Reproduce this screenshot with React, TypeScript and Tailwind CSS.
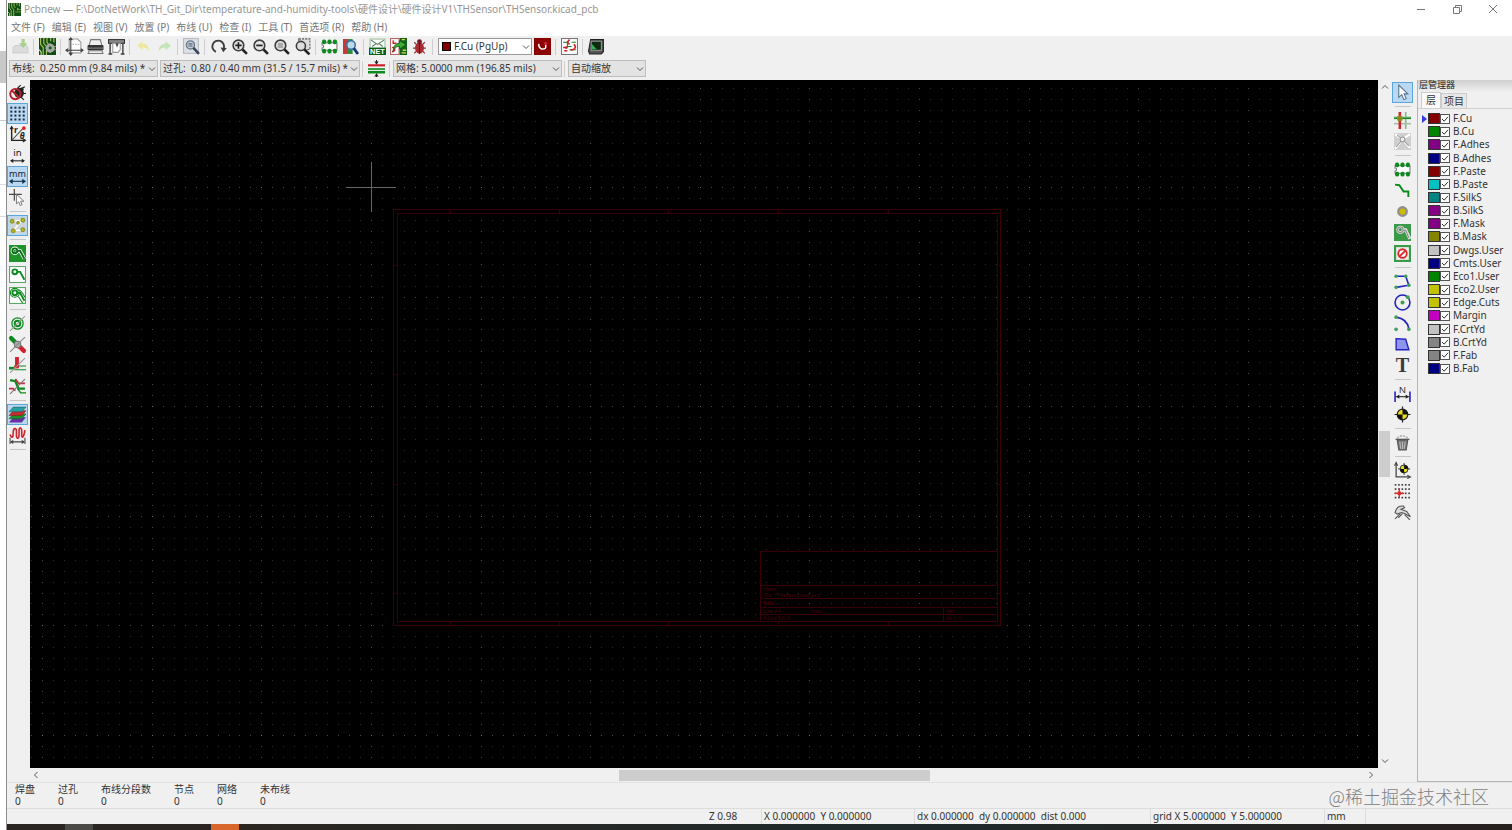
import React, { useState } from "react";

const GREEN = "#0b8a1e";
const RED = "#d0212c";
const INK = "#3c3c3c";
const BLUE = "#2222c0";

/* ---------- icons: 16 x 16 drawings ---------- */

const magnifier = (
  <>
    <circle cx="7" cy="7" r="5" fill="#e4e4e4" stroke={INK} strokeWidth="1.5" />
    <path d="M10.8 10.8L15 15" stroke="#222" strokeWidth="2.4" />
  </>
);

const trace = (c: string) => (
  <>
    <circle cx="5.5" cy="5.5" r="2.3" fill="none" stroke={c} strokeWidth="1.8" />
    <path d="M8 5.5H10.5L14.5 13" fill="none" stroke={c} strokeWidth="1.8" />
  </>
);

const target = (
  <>
    <circle cx="8" cy="8" r="5" fill="#e6dc20" stroke="#222" strokeWidth="1.1" />
    <path d="M8 8V3A5 5 0 0 1 13 8ZM8 8V13A5 5 0 0 1 3 8Z" fill="#111" />
    <path d="M8 .5V4M8 12V15.5M.5 8H4M12 8H15.5" stroke="#222" strokeWidth="1.1" />
  </>
);

const footprint = (
  <>
    <path d="M1 4.500H15V11.500H1V9.500A1.500 1.500 0 0 0 1 6.500Z" fill="#fff" stroke="#777" />
    {[1, 6.1, 11.2].map((x) => (
      <g key={x} fill={GREEN}>
        <rect x={x} y="1.5" width="3.8" height="4.3" rx="1.6" />
        <rect x={x} y="10.2" width="3.8" height="4.3" rx="1.6" />
      </g>
    ))}
  </>
);

const board = (
  <>
    <rect width="16" height="16" fill="#104d14" />
    <path d="M1.5 0V6L4 9V16M4.5 0V5L7 8V16M7.5 0V4L9 6M11 0V3M14 0V4" fill="none" stroke="#a9c25b" strokeWidth="1.1" />
    <path d="M0 11L2 13V16M12 6V9" stroke="#d8e79a" fill="none" />
    <path d="M9 11H16M11 8H16" stroke="#7fa548" />
  </>
);

const ICONS: Record<string, React.ReactNode> = {
  save: (
    <>
      <path d="M1 9L3 7H13L15 9V14H1Z" fill="#dcdcdc" stroke="#cfcfcf" />
      <path d="M9 1H12V5H14.5L10.5 9.5L6.5 5H9Z" fill="#a9cf95" />
    </>
  ),
  board,
  setup: (
    <>
      {board}
      <circle cx="10.5" cy="9.5" r="3" fill="none" stroke="#a8a8a8" strokeWidth="2.2" />
      <path d="M10.500 5V14M6 9.500H15M7.500 6.500L13.500 12.500M13.500 6.500L7.500 12.500" stroke="#a8a8a8" strokeWidth="1.2" />
      <circle cx="10.500" cy="9.500" r="1.400" fill="#1a5a1c" />
    </>
  ),
  page: (
    <>
      <path d="M3 1H11L14 4V14H3Z" fill="#fff" stroke="#999" />
      <path d="M4.500 0V16M0 11.500H16M3 2L4.500 0L6 2M14 10L16 11.500L14 13M2 10L0 11.500L2 13M3 14L4.500 16L6 14" fill="none" stroke={INK} />
      <path d="M6 6H13" stroke="#bbb" strokeDasharray="1.500 1" />
    </>
  ),
  print: (
    <>
      <path d="M3.500 1.500H12.500L14 7H2Z" fill="#eee" stroke="#777" />
      <rect x=".5" y="6.500" width="15" height="5" rx="1" fill="#333" />
      <path d="M1 9.500H15" stroke="#888" />
      <path d="M2 12H14L15 14.500H1Z" fill="#eee" stroke="#777" />
    </>
  ),
  plot: (
    <>
      <rect x=".5" y="1.500" width="15" height="3.500" fill="#888" stroke="#333" />
      <path d="M2 5V15M14 5V15M.5 15H4M12 15H15.500" stroke={INK} strokeWidth="1.300" />
      <path d="M4.500 5H11.500V11L9.500 13.500H4.500Z" fill="#fff" stroke="#999" />
      <path d="M7 5H10L8.500 9Z" fill="#444" />
    </>
  ),
  undo: <path d="M2 7L7 3V5.500C11 5.500 13.500 8 13.500 12.500C12 10 10 9 7 9V11.500Z" fill="#efe79f" />,
  redo: <path d="M14 7L9 3V5.500C5 5.500 2.500 8 2.500 12.500C4 10 6 9 9 9V11.500Z" fill="#c3e6b8" />,
  find: (
    <>
      <rect x=".5" y=".5" width="14" height="14" fill="#dde1e6" stroke="#b4bac2" />
      <circle cx="7" cy="6.500" r="3.800" fill="#c3cedb" stroke="#6a7687" strokeWidth="1.300" />
      <path d="M9.800 9.300L15 15" stroke="#39445a" strokeWidth="2.400" />
      <path d="M5 5.500H9M5 7.500H9" stroke="#55637a" />
    </>
  ),
  refresh: (
    <>
      <path d="M5.500 13A5.500 5.500 0 1 1 13 9.500" fill="none" stroke={INK} strokeWidth="1.700" />
      <path d="M10 9L15.800 9.500L12.500 13.500Z" fill={INK} />
    </>
  ),
  zoomIn: (
    <>
      {magnifier}
      <path d="M7 4V10M4 7H10" stroke="#222" strokeWidth="1.600" />
    </>
  ),
  zoomOut: (
    <>
      {magnifier}
      <path d="M4 7H10" stroke="#222" strokeWidth="1.600" />
    </>
  ),
  zoomFit: (
    <>
      {magnifier}
      <rect x="4.500" y="4.500" width="5" height="5" fill="#aaa" />
    </>
  ),
  zoomSel: (
    <>
      <rect x="4.500" y=".8" width="10.500" height="10" fill="#ddd" stroke="#555" strokeDasharray="2 1" />
      <circle cx="6.500" cy="7.500" r="4.300" fill="#ddd" stroke={INK} strokeWidth="1.500" />
      <path d="M9.800 10.800L14.500 15.500" stroke="#222" strokeWidth="2.400" />
    </>
  ),
  footprint,
  footprintFind: (
    <>
      <rect x="1" y="1" width="9" height="14" fill="#2f8a44" />
      <path d="M1 1H5V15H1Z" fill="#c23a3a" />
      <circle cx="8.500" cy="6.500" r="4" fill="#b9dbe8" stroke="#3a70a8" strokeWidth="1.400" />
      <path d="M11 9.500L15 15" stroke="#123a72" strokeWidth="2.600" />
    </>
  ),
  net: (
    <>
      <rect x="1" y="1" width="14" height="14" fill="#fff" stroke="#9dbda0" />
      <path d="M2 2L8 6L14 2M3 8L7 5M13 8L9 5" fill="none" stroke="#4c7f52" />
      <rect x="0" y="9" width="16" height="7" fill="#0a5f1b" />
      <text x="8" y="15" textAnchor="middle" fontSize="7" fontWeight="700" fontFamily="Liberation Sans, sans-serif" fill="#fff">NET</text>
    </>
  ),
  update: (
    <>
      <rect x=".5" y=".5" width="8" height="15" fill="#fff" stroke="#b66" />
      <rect x="9" y="0" width="7" height="16" fill="#14621c" />
      <path d="M3 2V5H6M2 9C6 8 5 13 2 13" fill="none" stroke={RED} strokeWidth="1.300" />
      <path d="M3 13C3 9 6 8 9 8V10.500L15 6L9 2.500V5C5 5 3 8 3 13Z" fill="#3fae35" stroke="#0a5f1b" strokeWidth=".8" />
      <path d="M11 1.500H14M11 14H15M12 11.500H15" stroke="#e4d84a" strokeWidth="1.300" />
    </>
  ),
  bug: (
    <>
      <path d="M3 4L5.500 6.500M13 4L10.500 6.500M2 9.500H14M3 14.500L5.500 12M13 14.500L10.500 12" stroke="#8b2a2a" />
      <ellipse cx="8" cy="9.500" rx="4.200" ry="5.300" fill="#a82a33" />
      <circle cx="8" cy="3.500" r="2.300" fill="#6e1c22" />
      <path d="M8 5V15" stroke="#5d1419" />
    </>
  ),
  layerPair: (
    <>
      <rect width="16" height="16" fill="#8b0000" />
      <path d="M4.500 5.500C4 10 8 11.500 11 9.500M11 9.500V6" fill="none" stroke="#fff" strokeWidth="1.400" />
      <circle cx="11" cy="5" r="1.500" fill={RED} />
    </>
  ),
  schematic: (
    <>
      <rect x=".5" y=".5" width="15" height="15" fill="#fff" stroke="#777" />
      <path d="M2 4H6V8H10M10 4H14M8 11H14" fill="none" stroke={GREEN} />
      <path d="M8 1.500L6 4L8 6M2 9H6M12 6C15 8 13 12 9 11M3 12H6" fill="none" stroke={RED} strokeWidth="1.500" />
      <circle cx="5" cy="9" r="1.300" fill={RED} />
    </>
  ),
  console: (
    <>
      <path d="M2.500 1.500H14.500V13L12.500 15H1.500L.5 12.500Z" fill="#555" stroke="#222" />
      <rect x="3" y="3" width="9.500" height="8.500" fill="#0b2a12" stroke="#aaa" strokeWidth=".8" />
      <path d="M3.500 5.500L8 10.500H3.500Z" fill="#38b256" />
    </>
  ),
  trackWidth: (
    <>
      <path d="M0 5H16" stroke={RED} strokeWidth="2" />
      <path d="M0 8.500H16" stroke={GREEN} strokeWidth="1.500" />
      <path d="M0 11.500H16" stroke={GREEN} strokeWidth="2.400" />
      <path d="M8 0V3M8 16V13" stroke="#222" />
      <path d="M6 1.500L8 4.500L10 1.500ZM6 15.500L8 12.500L10 15.500Z" fill="#222" />
    </>
  ),
  drcOff: (
    <>
      <path d="M8 4L11 1M12 4L15 2.500M12 9H16M11 12L14 15" stroke="#222" />
      <ellipse cx="9.500" cy="8.500" rx="4.500" ry="4.800" fill="#222" />
      <circle cx="12" cy="5" r="1.800" fill="#222" />
      <circle cx="6" cy="9.500" r="4.800" fill="none" stroke="#b5222c" strokeWidth="1.900" />
      <path d="M2.500 6L9.500 13" stroke="#b5222c" strokeWidth="1.900" />
    </>
  ),
  grid: (
    <g fill="#1f2c44">
      {[1, 4.7, 8.4, 12.1].map((y) => [1.2, 5.1, 9, 12.9].map((x) => <rect key={x + "-" + y} x={x} y={y + 0.6} width="1.9" height="1.9" />))}
    </g>
  ),
  polar: (
    <>
      <path d="M2.500 1V13.500H15" fill="none" stroke="#222" strokeWidth="1.300" />
      <path d="M1 3L2.500 .5L4 3M13 12L15.500 13.500L13 15" fill="none" stroke="#222" />
      <path d="M3 13L13 2.500" stroke="#555" />
      <circle cx="14" cy="2" r="1.700" fill="#e01b24" />
      <text x="6.500" y="7" textAnchor="middle" fontSize="8" fontWeight="700" fill="#222">r</text>
      <text x="12.500" y="12" textAnchor="middle" fontSize="8" fontWeight="700" fontStyle="italic" fill="#222">θ</text>
    </>
  ),
  inch: (
    <>
      <text x="8" y="8.500" textAnchor="middle" fontSize="9" fill="#222">in</text>
      <path d="M2 13H14" stroke="#222" />
      <path d="M1 13L4 11V15ZM15 13L12 11V15Z" fill="#222" />
    </>
  ),
  mm: (
    <>
      <text x="8" y="8.500" textAnchor="middle" fontSize="8.500" fill="#16202c">mm</text>
      <path d="M2 12.500H14" stroke="#16304a" />
      <path d="M0 12.500L3.500 10V15ZM16 12.500L12.500 10V15Z" fill="#16304a" />
    </>
  ),
  cursor: (
    <>
      <path d="M5 0V11M0 5H12" stroke="#444" strokeWidth="1.100" />
      <path d="M7 5V14L9.200 12L10.500 15.500L12.300 14.800L11 11.500H14Z" fill="#fff" stroke="#777" strokeWidth=".9" />
    </>
  ),
  ratsnest: (
    <>
      <rect x=".5" y=".5" width="15" height="15" fill="#ccd6d6" />
      <path d="M3 4L13 3L8 8L4 12.500L13 12.500" fill="none" stroke="#fff" strokeWidth="1.300" />
      {[[3, 4], [8.5, 5.5], [13, 3], [4, 13], [13, 12]].map(([x, y], i) => (
        <circle key={i} cx={x} cy={y} r={i === 1 ? 1.3 : 1.9} fill="#b3b51c" stroke="#77791b" strokeWidth=".7" />
      ))}
    </>
  ),
  zoneFill: (
    <>
      <rect width="16" height="16" fill="#1c9429" />
      <circle cx="5.500" cy="5.500" r="2.500" fill="none" stroke="#fff" strokeWidth="3" />
      <path d="M8 5.500H10.500L14.500 13" fill="none" stroke="#fff" strokeWidth="3.200" />
      {trace("#0d6a1d")}
    </>
  ),
  zoneOff: (
    <>
      <rect x=".5" y=".5" width="15" height="15" fill="#fff" stroke="#5aa863" />
      {trace(GREEN)}
    </>
  ),
  zoneOutline: (
    <>
      <rect x=".5" y=".5" width="15" height="15" fill="#fff" stroke="#5aa863" />
      <circle cx="5.500" cy="5.500" r="4.200" fill="none" stroke={GREEN} />
      <path d="M8 9C10 9 10 12 13 15M9 2.500C12 3 13 7 15.500 10" fill="none" stroke={GREEN} />
      {trace(GREEN)}
    </>
  ),
  via: (
    <>
      <circle cx="8" cy="8" r="5.300" fill="none" stroke={GREEN} strokeWidth="1.200" />
      <circle cx="8" cy="8" r="2.600" fill="none" stroke={GREEN} strokeWidth="1.800" />
      <path d="M1 15L15 1" stroke="#999" />
    </>
  ),
  pads: (
    <>
      <path d="M2 2L7 7" stroke={GREEN} strokeWidth="4" strokeLinecap="round" />
      <path d="M10 10L14 14" stroke={RED} strokeWidth="4" strokeLinecap="round" />
      <circle cx="8" cy="8" r="3" fill="#aaa" stroke="#777" />
      <path d="M1 15L15 1" stroke="#888" />
    </>
  ),
  tracks: (
    <>
      <path d="M5 8.500H16M5 12H16" stroke={GREEN} />
      <path d="M0 10.500H5" stroke={GREEN} strokeWidth="2.500" />
      <path d="M7.500 0V10" stroke={RED} strokeWidth="3.600" />
      <path d="M5 9.500H9" stroke={RED} strokeWidth="2.500" />
      <path d="M1 15L15 1" stroke="#999" />
    </>
  ),
  contrast: (
    <>
      <path d="M1 2L6 3L9 10H15" fill="none" stroke={GREEN} strokeWidth="2.200" />
      <path d="M6 1L9 5H15M0 10H4L6 12" fill="none" stroke="#c22f3b" strokeWidth="1.600" />
      <path d="M8 10L11 14H16" fill="none" stroke={GREEN} strokeWidth="1.400" />
      <path d="M1 15L15 1" stroke="#777" />
    </>
  ),
  layers: (
    <>
      <path d="M4 10.500H16L12 15.500H0Z" fill="#6a2fa5" />
      <path d="M4 7.500H16L12 12H0Z" fill="#18932b" stroke="#0c5c1b" strokeWidth=".5" />
      <path d="M4 4.500H16L12 9H0Z" fill="#c92a30" stroke="#7c1519" strokeWidth=".5" />
      <path d="M4 1H16L12 5.500H0Z" fill="#2b9ea0" stroke="#17595e" strokeWidth=".5" />
    </>
  ),
  microwave: (
    <>
      <path d="M1 7C3 12 4 9 4 5S7 0 7 4V8C7 12 9.500 11 9.500 7V3C9.500 0 12 0 12 4V8C12 11 14 10 15 3" fill="none" stroke={RED} strokeWidth="1.500" />
      <path d="M1 10V16M15 10V16M2 14H14" stroke="#444" />
      <path d="M1 14L4 12V16ZM15 14L12 12V16Z" fill="#444" />
    </>
  ),
  arrow: <path d="M4.500 1V12.500L7.300 10L9.300 14.700L11.500 13.700L9.500 9.300H13Z" fill="#fff" stroke="#56718c" />,
  highlight: (
    <>
      <path d="M0 5H16M11 0V16" stroke="#8fb893" strokeWidth="1.600" />
      <path d="M0 11H16" stroke="#a7bfa8" strokeWidth="1.500" />
      <path d="M5.500 0V16" stroke={RED} strokeWidth="2.400" />
      <path d="M0 6H16" stroke={GREEN} strokeWidth="1.300" />
      <circle cx="5.500" cy="6" r="2.700" fill="#8c8a1c" />
    </>
  ),
  localRats: (
    <>
      <rect width="16" height="16" fill="#cfcfcf" />
      <path d="M1 1L8 6L15 1M8 6L1 15M8 6L15 14" fill="none" stroke="#fff" strokeWidth="2" />
      <path d="M8 6L2 13M8 6L14 12M8 6L3 2" stroke="#999" />
      <circle cx="8" cy="6" r="2.200" fill="#eee" stroke="#999" />
    </>
  ),
  track: <path d="M1 2.500L5 3L9 9L13.500 9V14" fill="none" stroke={GREEN} strokeWidth="1.800" />,
  viaAdd: <circle cx="8" cy="8" r="4" fill="#cdbc00" stroke="#8f8f8f" strokeWidth="2.200" />,
  zone: (
    <>
      <rect width="16" height="16" fill="#3a9a47" />
      <circle cx="6" cy="5.500" r="2.600" fill="none" stroke="#e3e3e3" strokeWidth="2.400" />
      <path d="M8 5.500H11L15 14" fill="none" stroke="#e3e3e3" strokeWidth="3" />
      <circle cx="6" cy="5.500" r="2.600" fill="none" stroke="#888" />
      <path d="M9 6H11L14 13" fill="none" stroke="#888" />
    </>
  ),
  keepout: (
    <>
      <rect x="1" y="1" width="14" height="14" fill="#eee" stroke="#3a9a47" strokeWidth="2" />
      <circle cx="8" cy="8" r="4" fill="#fff" stroke="#e02828" strokeWidth="1.700" />
      <path d="M5.200 10.800L10.800 5.200" stroke="#e02828" strokeWidth="1.700" />
    </>
  ),
  polyline: (
    <>
      <path d="M2 3H11L14 11.500L2 13.500" fill="none" stroke={BLUE} strokeWidth="1.500" />
      {[[2, 3], [11, 3], [14, 11.500], [2, 13.500]].map(([x, y]) => <circle key={x + "," + y} cx={x} cy={y} r="1.700" fill="#3f9e5a" />)}
    </>
  ),
  circle: (
    <>
      <circle cx="8" cy="8" r="7" fill="none" stroke={BLUE} strokeWidth="1.500" />
      <circle cx="8" cy="8" r="1.900" fill="#3f9e5a" />
      <circle cx="13" cy="3" r="1.800" fill="#3f9e5a" />
    </>
  ),
  arc: (
    <>
      <path d="M2 2C9 3 13 7 14 13" fill="none" stroke={BLUE} strokeWidth="1.600" />
      {[[2, 2], [2, 13.500], [14, 13.500]].map(([x, y]) => <circle key={x + "," + y} cx={x} cy={y} r="1.700" fill="#3f9e5a" />)}
    </>
  ),
  polygon: <path d="M2 2.500L11 3L14 13H2Z" fill="#8f95ee" stroke={BLUE} strokeWidth="1.300" />,
  text: <text x="8" y="14" textAnchor="middle" fontSize="19" fontWeight="700" fontFamily="Liberation Serif, serif" fill="#3a3a3a">T</text>,
  dimension: (
    <>
      <path d="M1 6V16M15 6V16" stroke={BLUE} strokeWidth="1.500" />
      <path d="M2 11H14" stroke="#222" />
      <path d="M2 11L5 9V13ZM14 11L11 9V13Z" fill="#222" />
      <text x="8" y="7.500" textAnchor="middle" fontSize="9" fontFamily="Liberation Sans, sans-serif" fill="#333">N</text>
    </>
  ),
  target,
  trash: (
    <>
      <path d="M3 5.500H13L11.500 15H4.500Z" fill="#777" stroke="#555" />
      <path d="M5.500 7L6.300 14M8 7V14M10.500 7L9.700 14" stroke="#bbb" />
      <path d="M3 4C5 1 11 1 13 4" fill="none" stroke="#999" strokeDasharray="2 1" />
      <path d="M1.500 5H14.500" stroke="#555" strokeWidth="1.200" />
    </>
  ),
  origin: (
    <>
      <path d="M2 1V14H15" fill="none" stroke="#444" strokeWidth="1.200" />
      <path d="M.5 3.500L2 .5L3.500 3.500M12.500 12.500L15.500 14L12.500 15.500" fill="none" stroke="#444" />
      <g transform="translate(3.500 .5) scale(.75)">{target}</g>
    </>
  ),
  gridOrigin: (
    <>
      <g fill="#333">
        {[1, 5, 9, 13].map((y) => [1, 4.200, 7.400, 10.600, 13.800].map((x) => <rect key={x + "-" + y} x={x - 0.3} y={y} width="1.500" height="1.500" />))}
      </g>
      <path d="M5 5V14M.5 9.700H9.500" stroke="#e02828" strokeWidth="1.200" />
      <circle cx="5" cy="9.700" r="2" fill="#e02828" />
    </>
  ),
  measure: (
    <>
      <path d="M1 8C2 4 5 1.500 9 2L10 3.500L6.500 5L12 7L15.500 12L10 9L7 8L3 9.500Z" fill="#ddd" stroke="#555" />
      <path d="M1 14L6 9M4 13L8 9M15 15L10 10" fill="none" stroke="#555" strokeWidth="1.100" />
    </>
  ),
};

function Icon({ name, className = "size-[17px] overflow-visible" }: { name: string; className?: string }) {
  return (
    <svg viewBox="0 0 16 16" className={className} aria-hidden="true">
      {ICONS[name]}
    </svg>
  );
}

function Tool({ name, label, active = false }: { name: string; label: string; active?: boolean }) {
  return (
    <button
      type="button"
      aria-label={label}
      aria-pressed={active}
      className={
        "flex size-[21px] shrink-0 items-center justify-center border " +
        (active ? "border-[#5aa5dc] bg-[#b9d8f1]" : "border-transparent hover:bg-[#dcebf7]")
      }
    >
      <Icon name={name} />
    </button>
  );
}

const VSep = () => <div className="mx-[2px] h-4 w-[2px] shrink-0 border-l border-[#cfcfcf]" />;
const HSep = () => <div className="my-[3px] ml-[3px] h-px w-4 shrink-0 bg-[#c6c6c6]" />;

type Item = [string, string, boolean?] | null;

const TOP_TOOLS: Item[] = [
  ["save", "保存"], null, ["setup", "电路板设置"], null, ["page", "页面设置"], ["print", "打印"], ["plot", "绘制"], null,
  ["undo", "撤销"], ["redo", "重做"], null, ["find", "查找"], null, ["refresh", "刷新"], ["zoomIn", "放大"],
  ["zoomOut", "缩小"], ["zoomFit", "适合屏幕"], ["zoomSel", "缩放到选择"], null, ["footprint", "封装编辑器"],
  ["footprintFind", "封装浏览器"], null, ["net", "加载网表"], ["update", "更新 PCB"], ["bug", "设计规则检查"], null,
];

const LEFT_TOOLS: Item[] = [
  ["drcOff", "禁用 DRC"], ["grid", "显示网格", true], ["polar", "极坐标"], ["inch", "英寸"], ["mm", "毫米", true],
  ["cursor", "光标形状"], null, ["ratsnest", "显示飞线", true], null, ["zoneFill", "填充覆铜"], ["zoneOff", "隐藏覆铜"],
  ["zoneOutline", "覆铜轮廓"], null, ["via", "过孔轮廓"], ["pads", "焊盘轮廓"], ["tracks", "布线轮廓"],
  ["contrast", "高对比度"], null, ["layers", "层管理器", true], ["microwave", "微波工具"], null,
];

const RIGHT_TOOLS: Item[] = [
  ["arrow", "选择", true], null, ["highlight", "高亮网络"], ["localRats", "本地飞线"], null, ["footprint", "添加封装"],
  ["track", "布线"], ["viaAdd", "添加过孔"], ["zone", "添加覆铜"], ["keepout", "添加禁止区"], null, ["polyline", "图形线"],
  ["circle", "图形圆"], ["arc", "图形弧"], ["polygon", "图形多边形"], ["text", "文本"], null, ["dimension", "尺寸"],
  ["target", "对齐目标"], null, ["trash", "删除"], null, ["origin", "钻孔原点"], ["gridOrigin", "网格原点"], ["measure", "测量"],
];

function Tools({ items, vertical = false }: { items: Item[]; vertical?: boolean }) {
  return (
    <>
      {items.map((it, i) =>
        it ? <Tool key={i} name={it[0]} label={it[1]} active={it[2]} /> : vertical ? <HSep key={i} /> : <VSep key={i} />
      )}
    </>
  );
}

function Chevron({ className }: { className: string }) {
  return (
    <svg viewBox="0 0 8 8" className={className} fill="none" stroke="#555" aria-hidden="true">
      <path d="M1 2.500L4 5.500L7 2.500" />
    </svg>
  );
}

function Combo({ label, value, width, swatch = false }: { label: string; value: string; width: string; swatch?: boolean }) {
  return (
    <div className={"relative shrink-0 " + width}>
      <select
        aria-label={label}
        className={
          "block h-[17px] w-full appearance-none border pr-[10px] leading-[15px] " +
          (swatch ? "border-[#999] bg-white pl-[15px]" : "border-[#bdbdbd] bg-[#e3e3e3] pl-[2px]")
        }
      >
        <option>{value}</option>
      </select>
      {swatch && <span className="pointer-events-none absolute top-1 left-1 size-[9px] border border-black bg-[#840000]" />}
      <Chevron className="pointer-events-none absolute top-[5px] right-[2px] size-2" />
    </div>
  );
}

/* ---------- board canvas ---------- */

const PITCH = 10.96;
const dots = (() => {
  let dim = "";
  let mid = "";
  let bright = "";
  for (let r = -9; r < 90; r++) {
    for (let c = -31; c < 200; c++) {
      const d = `M${Math.round(341 + c * PITCH)} ${Math.round(107 + r * PITCH)}h1v1h-1z`;
      const onRow = r % 10 === 0;
      const onCol = c % 10 === 0;
      if (onRow && onCol) bright += d;
      else if (onRow || onCol) mid += d;
      else dim += d;
    }
  }
  return { dim, mid, bright };
})();

function BoardCanvas() {
  return (
    <div className="relative min-w-0 flex-1 overflow-hidden bg-black">
      <svg className="absolute inset-0 size-full" role="img" aria-label="PCB">
        <path d={dots.dim} fill="#2c2c2c" />
        <path d={dots.mid} fill="#484848" />
        <path d={dots.bright} fill="#686868" />
        <g fill="none" stroke="#390009" shapeRendering="crispEdges">
          <rect x="363.500" y="129.500" width="607" height="416" />
          <rect x="367.500" y="133.500" width="600" height="408" />
          <path d="M730.500 541V471.500H967M730 505.500H967M730 518.500H967M730 527.500H967M730 534.500H967M913.500 528V541" />
          <path d="M420.500 130V133M529.500 130V133M638.500 130V133M748.500 130V133M858.500 130V133M420.500 542V545M529.500 542V545M638.500 542V545M748.500 542V545M858.500 542V545" />
          <path d="M364 185.500H367M364 294.500H367M364 404.500H367M364 513.500H367M968 185.500H970M968 294.500H970M968 404.500H970M968 513.500H970" />
        </g>
        <g fill="#4a000a" fontSize="5">
          <text x="733" y="511">Sheet:</text>
          <text x="733" y="517">File: THSensor.kicad_pcb</text>
          <text x="733" y="525" fontWeight="700">Title:</text>
          <text x="733" y="533">Size: A4</text>
          <text x="780" y="533">Date:</text>
          <text x="733" y="540">KiCad E.D.A.</text>
          <text x="916" y="533">Rev:</text>
          <text x="916" y="540">Id: 1/1</text>
        </g>
        <path d="M316 107.500H366M341.500 82V132" stroke="#666" shapeRendering="crispEdges" />
      </svg>
    </div>
  );
}

/* ---------- layer manager ---------- */

const LAYERS: [string, string][] = [
  ["F.Cu", "bg-[#840000]"], ["B.Cu", "bg-[#008400]"], ["F.Adhes", "bg-[#840084]"], ["B.Adhes", "bg-[#000084]"],
  ["F.Paste", "bg-[#840000]"], ["B.Paste", "bg-[#00c2c2]"], ["F.SilkS", "bg-[#008484]"], ["B.SilkS", "bg-[#840084]"],
  ["F.Mask", "bg-[#840084]"], ["B.Mask", "bg-[#848400]"], ["Dwgs.User", "bg-[#c2c2c2]"], ["Cmts.User", "bg-[#000084]"],
  ["Eco1.User", "bg-[#008400]"], ["Eco2.User", "bg-[#c2c200]"], ["Edge.Cuts", "bg-[#c2c200]"], ["Margin", "bg-[#c200c2]"],
  ["F.CrtYd", "bg-[#c2c2c2]"], ["B.CrtYd", "bg-[#848484]"], ["F.Fab", "bg-[#848484]"], ["B.Fab", "bg-[#000084]"],
];

function LayerRow({ name, color, current }: { name: string; color: string; current: boolean }) {
  const [on, setOn] = useState(true);
  return (
    <label className="flex min-h-0 flex-1 items-center leading-[13px]">
      <span className="flex w-[6px] shrink-0 items-center">
        {current && (
          <svg viewBox="0 0 5 8" className="h-2 w-[5px]" aria-hidden="true">
            <path d="M0 0L5 4L0 8Z" fill="#3a3ae0" />
          </svg>
        )}
      </span>
      <span className={"h-[11px] w-3 shrink-0 border border-[#333] " + color} />
      <span className="relative mr-[3px] size-[10px] shrink-0">
        <input
          type="checkbox"
          checked={on}
          onChange={(e) => setOn(e.target.checked)}
          className="block size-[10px] appearance-none border border-[#555] bg-white"
        />
        {on && (
          <svg viewBox="0 0 10 10" className="pointer-events-none absolute inset-0 size-full" fill="none" stroke="#333" aria-hidden="true">
            <path d="M2 5L4.200 7.200L8 2.800" />
          </svg>
        )}
      </span>
      {name}
    </label>
  );
}

function LayerManager() {
  return (
    <aside className="flex w-[95px] shrink-0 flex-col border-b border-l border-[#b5b5b5]">
      <div className="h-3 shrink-0 bg-linear-to-b from-[#cfcfcf] to-[#f0f0f0] pl-[1px]">
        <h2 className="text-[9px] leading-[10px] whitespace-nowrap text-[#222]">层管理器</h2>
      </div>
      <div role="tablist" className="mt-px flex h-4 shrink-0 items-end border-b border-[#d0d0d0] pl-[3px]">
        <button type="button" role="tab" aria-selected="true" className="h-4 border border-b-0 border-[#ccc] bg-[#fafafa] px-1 leading-[15px]">层</button>
        <button type="button" role="tab" aria-selected="false" className="h-[15px] border border-b-0 border-[#ccc] bg-[#e8e8e8] px-[2px] leading-[14px]">项目</button>
      </div>
      <div className="mt-[3px] flex h-[263px] shrink-0 flex-col pl-1">
        {LAYERS.map(([n, c], i) => (
          <LayerRow key={n} name={n} color={c} current={i === 0} />
        ))}
      </div>
    </aside>
  );
}

/* ---------- bars ---------- */

const MENUS = ["文件 (F)", "编辑 (E)", "视图 (V)", "放置 (P)", "布线 (U)", "检查 (I)", "工具 (T)", "首选项 (R)", "帮助 (H)"];

const COUNTS: [string, string][] = [
  ["焊盘", "0"], ["过孔", "0"], ["布线分段数", "0"], ["节点", "0"], ["网络", "0"], ["未布线", "0"],
];

function TitleBar() {
  return (
    <header className="flex h-[18px] shrink-0 items-center bg-white pl-px text-[#969696]">
      <Icon name="board" className="size-[13px] shrink-0" />
      <h1 className="ml-[3px] flex-1 whitespace-pre">
        {"Pcbnew — F:\\DotNetWork\\TH_Git_Dir\\temperature-and-humidity-tools\\硬件设计\\硬件设计V1\\THSensor\\THSensor.kicad_pcb"}
      </h1>
      <div className="flex pr-px text-[#777]">
        {[
          ["最小化", "M1 5.500H9"],
          ["还原", "M1.500 3.500H7.500V9.500H1.500ZM3.500 3V1.500H9.500V7.500H8"],
          ["关闭", "M1 1L9 9M9 1L1 9"],
        ].map(([label, d]) => (
          <button key={label} type="button" aria-label={label} className="flex h-[18px] w-9 items-center justify-center">
            <svg viewBox="0 0 10 10" className="size-[10px]" fill="none" stroke="currentColor" aria-hidden="true">
              <path d={d} />
            </svg>
          </button>
        ))}
      </div>
    </header>
  );
}

export default function App() {
  return (
    <div className="flex h-screen overflow-hidden bg-white font-['Noto_Sans','Noto_Sans_CJK_SC',sans-serif] text-[10px] leading-[14px] text-[#333]">
      <div className="flex w-[6px] shrink-0 flex-col bg-white pt-[51px]">
        <div className="h-8 bg-[#c9c9c9]" />
        <div className="h-[38px] border-b border-[#ccc]" />
        <div className="h-16 border-b border-[#ddd]" />
        <div className="h-8 border-b border-[#ddd]" />
      </div>

      <div className="flex min-w-0 flex-1 flex-col border-l border-[#8d8d8d] bg-[#f0f0f0]">
        <TitleBar />
        <nav className="flex h-[18px] shrink-0 items-center gap-[7px] bg-white pl-1 text-[#777]">
          {MENUS.map((m) => (
            <button key={m} type="button" className="whitespace-nowrap">{m}</button>
          ))}
        </nav>

        <div className="flex h-[21px] shrink-0 items-center pl-[3px]">
          <Tools items={TOP_TOOLS} />
          <div className="w-[2px]" />
          <Combo label="当前层" value="F.Cu (PgUp)" width="w-[94px]" swatch />
          <Tool name="layerPair" label="层对" />
          <VSep />
          <Tool name="schematic" label="原理图" />
          <VSep />
          <Tool name="console" label="脚本控制台" />
        </div>

        <div className="flex h-[23px] shrink-0 items-center pl-[2px]">
          <Combo label="布线宽度" value={"布线:\u00a0 0.250 mm (9.84 mils) *"} width="w-[149px]" />
          <div className="w-[2px]" />
          <Combo label="过孔尺寸" value={"过孔:\u00a0 0.80 / 0.40 mm (31.5 / 15.7 mils) *"} width="w-[200px]" />
          <VSep />
          <Tool name="trackWidth" label="自动布线宽度" />
          <VSep />
          <Combo label="网格" value="网格: 5.0000 mm (196.85 mils)" width="w-[169px]" />
          <VSep />
          <Combo label="缩放" value="自动缩放" width="w-[78px]" />
        </div>

        <main className="flex min-h-0 flex-1">
          <div className="flex min-w-0 flex-1 flex-col">
            <div className="flex min-h-0 flex-1">
              <div role="toolbar" aria-label="选项" className="flex w-[23px] shrink-0 flex-col items-start overflow-hidden pt-[2px]">
                <Tools items={LEFT_TOOLS} vertical />
              </div>
              <BoardCanvas />
              <div className="flex w-[13px] shrink-0 flex-col items-center">
                <Chevron className="my-[3px] size-2 shrink-0 rotate-180" />
                <div className="min-h-0 w-[11px] flex-1">
                  <div className="h-[51%]" />
                  <div className="h-[7%] bg-[#cdcdcd]" />
                </div>
                <Chevron className="my-[3px] size-2 shrink-0" />
              </div>
            </div>
            <div className="flex h-[14px] shrink-0 items-center pr-4 pl-[25px]">
              <Chevron className="size-2 shrink-0 rotate-90" />
              <div className="flex h-[11px] flex-1">
                <div className="w-[43.6%]" />
                <div className="w-[23.5%] bg-[#cdcdcd]" />
              </div>
              <Chevron className="size-2 shrink-0 -rotate-90" />
            </div>
          </div>
          <div role="toolbar" aria-label="绘图" className="flex w-[26px] shrink-0 flex-col items-start overflow-hidden pt-[2px] pl-px">
            <Tools items={RIGHT_TOOLS} vertical />
          </div>
          <LayerManager />
        </main>

        <section className="relative flex h-[26px] shrink-0 gap-[23px] border-t border-[#e2e2e2] pl-2">
          {COUNTS.map(([k, v]) => (
            <dl key={k} className="leading-3">
              <dt>{k}</dt>
              <dd>{v}</dd>
            </dl>
          ))}
          <p className="absolute top-px right-[23px] font-['Noto_Sans_CJK_SC',sans-serif] text-lg leading-6 font-light text-[#808080]">@稀土掘金技术社区</p>
        </section>

        <footer className="flex h-4 shrink-0 border-t border-[#dcdcdc] whitespace-pre">
          <div className="flex-1" />
          <div className="w-[54px] pl-[2px]">Z 0.98</div>
          <div className="w-[153px] border-l border-[#dcdcdc] pl-[2px]">{"X 0.000000  Y 0.000000"}</div>
          <div className="w-[236px] border-l border-[#dcdcdc] pl-[2px]">{"dx 0.000000  dy 0.000000  dist 0.000"}</div>
          <div className="w-[174px] border-l border-[#dcdcdc] pl-[2px]">{"grid X 5.000000  Y 5.000000"}</div>
          <div className="w-[41px] border-l border-[#dcdcdc] pl-[2px]">mm</div>
          <div className="w-[147px] border-l border-[#dcdcdc]" />
        </footer>

        <div className="flex h-[6px] shrink-0 bg-[#2a2522]">
          <div className="w-[58px]" />
          <div className="w-7 bg-[#4c4a47]" />
          <div className="w-[118px]" />
          <div className="w-7 bg-[#d9662a]" />
          <div className="flex-1 bg-linear-to-r from-[#2b2620] via-[#1f2a2b] to-[#26201f]" />
        </div>
      </div>
    </div>
  );
}
